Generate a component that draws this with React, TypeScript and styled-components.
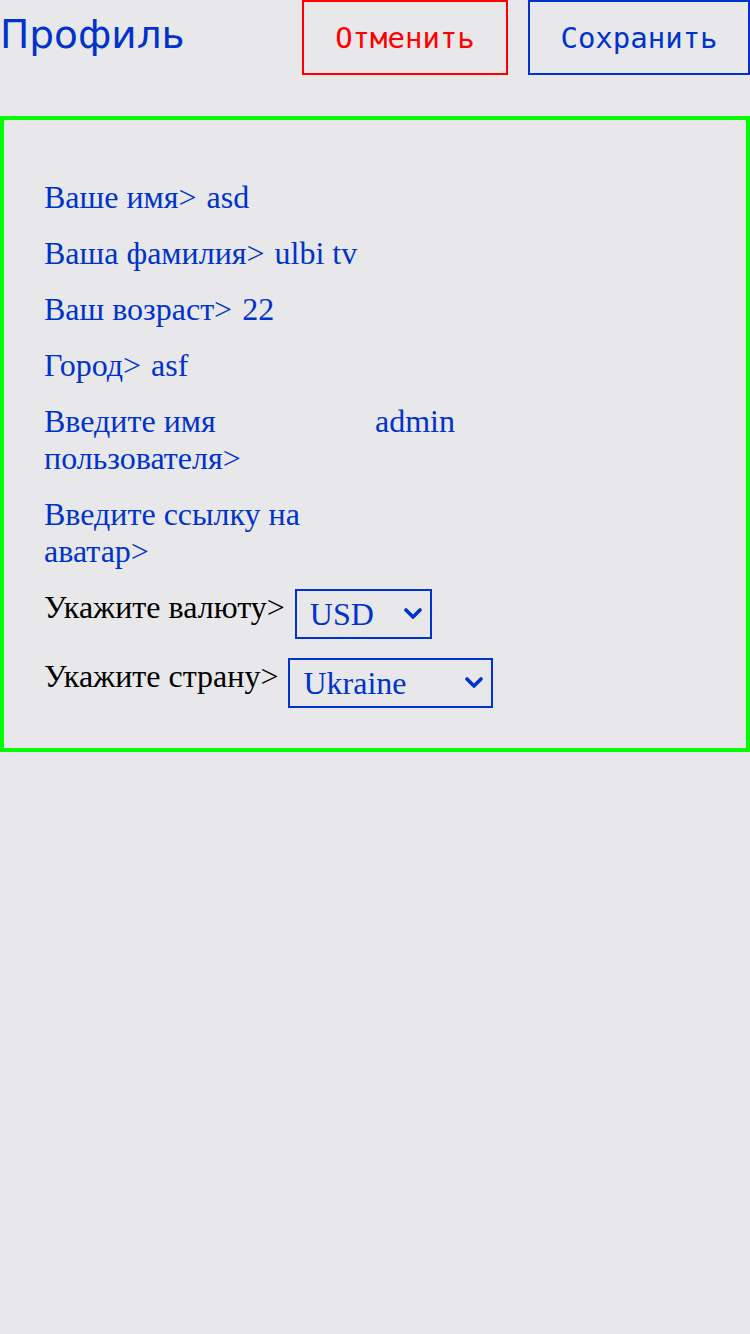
import { FunctionComponent } from 'react'
import styled, { createGlobalStyle } from 'styled-components'

const GlobalStyle = createGlobalStyle`
  html, body {
    margin: 0;
    padding: 0;
    background: #e8e8ea;
    min-height: 100%;
  }
  body {
    min-height: 1334px;
  }
`

const Page = styled.div`
  width: 750px;
  min-height: 1334px;
  background: #e8e8ea;
`

const Header = styled.div`
  display: flex;
  align-items: baseline;
  justify-content: space-between;
  height: 75px;
`

const Title = styled.h1`
  margin: 0;
  font-family: 'DejaVu Sans', sans-serif;
  font-weight: normal;
  font-size: 39px;
  color: #0033cc;
`

const Buttons = styled.div`
  display: flex;
  align-items: baseline;
  gap: 20px;
`

const Button = styled.button<{ $color: string; $width: number }>`
  width: ${p => p.$width}px;
  height: 75px;
  padding: 0;
  background: transparent;
  border: 2px solid ${p => p.$color};
  color: ${p => p.$color};
  font-family: 'DejaVu Sans Mono', monospace;
  font-size: 29px;
  cursor: pointer;
`

const Card = styled.div`
  margin-top: 41px;
  border: 4px solid #00ff00;
  padding: 59px 40px 40px;
  display: flex;
  flex-direction: column;
  gap: 19px;
  font-family: 'Liberation Serif', serif;
  font-size: 32px;
  line-height: 37px;
`

const Row = styled.div`
  display: flex;
  align-items: flex-start;
  gap: 10px;
  color: #0033cc;
`

const Label = styled.span<{ $width?: number; $dark?: boolean }>`
  flex: none;
  width: ${p => (p.$width ? `${p.$width}px` : 'auto')};
  color: ${p => (p.$dark ? '#000' : 'inherit')};
`

const Value = styled.span`
  color: #0033cc;
`

const SelectWrap = styled.div<{ $width: number }>`
  position: relative;
  width: ${p => p.$width}px;
  height: 50px;
  flex: none;
  svg {
    position: absolute;
    right: 10px;
    top: 19px;
    pointer-events: none;
  }
`

const Select = styled.select`
  appearance: none;
  width: 100%;
  height: 100%;
  box-sizing: border-box;
  margin: 0;
  padding: 0 0 0 13px;
  background: transparent;
  border: 2px solid #0033cc;
  border-radius: 0;
  color: #0033cc;
  font-family: 'Liberation Serif', serif;
  font-size: 32px;
  outline: none;
`

const Chevron = () => (
  <svg width="18" height="12" viewBox="0 0 18 12">
    <polyline points="2,2 9,9 16,2" fill="none" stroke="#0033cc" strokeWidth="3.6" strokeLinecap="round" strokeLinejoin="round" />
  </svg>
)

interface FieldProps {
  label: string
  value: string
  width?: number
}

const Field: FunctionComponent<FieldProps> = ({ label, value, width }) => (
  <Row>
    <Label $width={width}>{label}</Label>
    <Value>{value}</Value>
  </Row>
)

const App: FunctionComponent = () => {
  return (
    <Page>
      <GlobalStyle />
      <Header>
        <Title>Профиль</Title>
        <Buttons>
          <Button $color="#ff0000" $width={206}>Отменить</Button>
          <Button $color="#0033cc" $width={222}>Сохранить</Button>
        </Buttons>
      </Header>
      <Card>
        <Field label="Ваше имя>" value="asd" />
        <Field label="Ваша фамилия>" value="ulbi tv" />
        <Field label="Ваш возраст>" value="22" />
        <Field label="Город>" value="asf" />
        <Field label="Введите имя пользователя>" value="admin" width={321} />
        <Field label="Введите ссылку на аватар>" value="" width={321} />
        <Row>
          <Label $dark>Укажите валюту&gt;</Label>
          <SelectWrap $width={137}>
            <Select defaultValue="USD">
              <option value="RUB">RUB</option>
              <option value="EUR">EUR</option>
              <option value="USD">USD</option>
            </Select>
            <Chevron />
          </SelectWrap>
        </Row>
        <Row>
          <Label $dark>Укажите страну&gt;</Label>
          <SelectWrap $width={205}>
            <Select defaultValue="Ukraine">
              <option value="Armenia">Armenia</option>
              <option value="Russia">Russia</option>
              <option value="Belarus">Belarus</option>
              <option value="Kazakhstan">Kazakhstan</option>
              <option value="Ukraine">Ukraine</option>
            </Select>
            <Chevron />
          </SelectWrap>
        </Row>
      </Card>
    </Page>
  )
}

export default App
